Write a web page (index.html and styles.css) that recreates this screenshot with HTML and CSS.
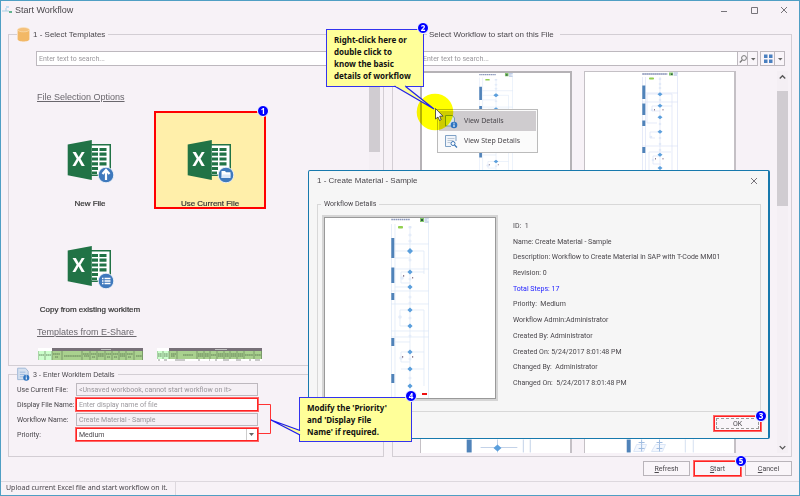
FILE: index.html
```html
<!DOCTYPE html>
<html lang="en">
<head>
<meta charset="utf-8">
<title>Start Workflow</title>
<link rel="stylesheet" href="styles.css">
</head>
<body>
<svg class="defs" aria-hidden="true">
  <symbol id="excel" viewBox="0 0 47 43">
    <rect x="24" y="4" width="20" height="32" fill="#217346"/>
    <rect x="24" y="5.500" width="18.500" height="29" fill="#fff"/>
    <g fill="#217346"><path d="M25 8h6v3h-6zM32.500 8h7v3h-7zM25 12.600h6v3.200h-6zM32.500 12.600h7v3.200h-7zM25 17.400h6v3.200h-6zM32.500 17.400h7v3.200h-7zM25 22.200h6v3.200h-6zM32.500 22.200h7v3.200h-7zM25 27h6v3h-6zM25 31.500h5v2.500h-5z"/></g>
    <path d="M.7 4.500 24.800 0v40L.7 35.300z" fill="#217346"/>
    <circle cx="39" cy="35" r="7.800" fill="#3f79bd" stroke="#f1f4f8" stroke-width=".9"/>
  </symbol>
  <symbol id="flow" viewBox="0 0 38 183" preserveAspectRatio="none">
    <path d="M.5 7v175M4 7v175M19 9v172M33 34v23M33 93v42M33 135v34M0 52h38M0 27h38M0 74h38M0 87h38M0 114h38M0 120h38M4 34h29M4 41h15M10 55h23M10 55v11h9M4 70h15M9 93h24M9 93v16h10M4 125h15M10 152h23M10 135h23M10 135v10h9M37.500 0v182" fill="none" stroke="#dbe6f7" stroke-width=".7"/>
    <g fill="#e4ecf9"><circle cx="19" cy="18" r="1.600"/><circle cx="19" cy="24" r="1.600"/><circle cx="19" cy="43" r="1.500"/><circle cx="19" cy="62" r="1.500"/><circle cx="19" cy="80" r="1.500"/><circle cx="19" cy="86" r="1.500"/><circle cx="19" cy="101" r="1.500"/><circle cx="19" cy="119" r="1.500"/><circle cx="19" cy="142" r="1.500"/><circle cx="19" cy="161" r="1.500"/><circle cx="9" cy="100" r="1.800"/><circle cx="11" cy="61" r="1.800"/><circle cx="10" cy="141" r="1.800"/></g>
    <path d="M.3 21h3v20h-3zM.3 50.500h3V66h-3zM.3 76h3v7h-3zM.3 121h3v8h-3zM.3 157h3v9h-3z" fill="#5083b9"/>
    <path d="m19 31 3 3-3 3-3-3zM19 52.400l2.600 2.600-2.600 2.600-2.600-2.600zM19 67.400l2.600 2.600-2.600 2.600-2.600-2.600zM19 90.400l2.600 2.600-2.600 2.600-2.600-2.600zM19 106.400l2.600 2.600-2.600 2.600-2.600-2.600zM19 132.400l2.600 2.600-2.600 2.600-2.600-2.600zM19 149.400l2.600 2.600-2.600 2.600-2.600-2.600zM19 166.400l2.600 2.600-2.600 2.600-2.600-2.600z" fill="#5b9fdc"/>
    <rect x="7" y="9" width="5" height="2.500" rx=".8" fill="#92d050"/>
    <rect x="17.500" y="9" width="3" height="2.500" rx=".8" fill="#dfe8f8"/>
    <path d="M12 58h1.200v1.800H12zM21 60h1.200v1.500H21zM11 139h1.200v1.800H11zM21 139h1.200v1.800H21z" fill="#8f7f92"/>
    <path d="M.3 2.500h18.500" stroke="#8a97bb" stroke-width="1.600" stroke-dasharray="1.600 .5"/>
    <path d="M29 0h4v5h-4z" fill="#84c76d"/><path d="M30 2h2v2h-2z" fill="#2d5b41"/>
    <path d="M33.500 1h4M33.500 3h3M33.500 5h4" stroke="#89a3d0" stroke-width=".8"/>
  </symbol>
  <symbol id="flow2" viewBox="0 0 36 110">
    <path d="M.5 5v105M3.500 5v105M18 5v105M30 22v88M0 21h36M0 30h36M5 22h25M5 22v29h10M10 34h20M10 34v5h8M8 60h10M8 60v6h5M0 74h36M7 80h22M7 80v24M11 84h8M11 84v8h8M35.500 0v110" fill="none" stroke="#dbe3f7" stroke-width=".7"/>
    <g fill="#e1e9f8"><circle cx="18" cy="7" r="1.300"/><circle cx="18" cy="12" r="1.300"/><circle cx="18" cy="16" r="1.300"/><circle cx="18" cy="28" r="1.300"/><circle cx="18" cy="52" r="1.300"/><circle cx="18" cy="66" r="1.300"/><circle cx="18" cy="72" r="1.300"/><circle cx="18" cy="78" r="1.300"/><circle cx="10" cy="38" r="1.300"/><circle cx="9" cy="65" r="1.300"/><circle cx="11" cy="88" r="1.300"/></g>
    <path d="M.3 13.500h3V27h-3zM.3 31.500h3V43h-3zM.3 48.500h3v5.500h-3zM.3 75h3v6h-3z" fill="#5083b9"/>
    <path d="m18 20.200 2.500 2-2.500 2-2.500-2zM18 31.700l2.500 2-2.500 2-2.500-2zM18 43.200l2.500 2-2.500 2-2.500-2zM18 57.700l2.500 2-2.500 2-2.500-2zM18 80.700l2.500 2-2.500 2-2.500-2zM18 94l2.500 2-2.500 2-2.500-2z" fill="#5b9fdc"/>
    <rect x="7" y="5.500" width="5" height="2" rx=".8" fill="#92d050"/>
    <path d="M12 37h1v1.500h-1zM20.500 37h1v1.500h-1zM13 86h1v1.500h-1zM20.500 86h1v1.500h-1z" fill="#8f7f92"/>
    <path d="M.3 2h25" stroke="#7c88b0" stroke-width="1.400" stroke-dasharray="1.600 .4"/>
    <path d="M27 .5h4v3h-4z" fill="#84c76d"/><path d="M29 1.500h1.500V3H29z" fill="#2d5b41"/>
    <path d="M31.500 1h4M31.500 3h3.500" stroke="#89a3d0" stroke-width=".8"/>
  </symbol>
  <symbol id="cylinder" viewBox="0 0 12 14">
    <path d="M.5 2.500v9c0 2.800 11 2.800 11 0v-9z" fill="#f2b866"/>
    <ellipse cx="6" cy="2.500" rx="5.500" ry="2" fill="#f4c17b" stroke="#fbe3bd" stroke-width=".6"/>
  </symbol>
  <symbol id="docinfo" viewBox="0 0 14 15">
    <path d="M.7.700h8.500L12 4v9H.7z" fill="#d5e0ef" stroke="#9db6d6"/>
    <path d="M3 5h6M3 7.500h6M3 10h4" stroke="#9ab9e0"/>
    <circle cx="10" cy="11" r="3.300" fill="#2e74c0"/>
    <path d="M10 10.500v2.500M10 8.700v1" stroke="#fff" stroke-width="1.200"/>
  </symbol>
</svg>

<main class="window">
  <header class="titlebar">
    <svg class="app-icon" viewBox="0 0 10 10"><path d="M0 6h4M4 3v3h3" stroke="#a9cfe3" fill="none"/><path d="M4 1h3v2H4z" fill="#c3dcf0"/><path d="M7 6h3v2H7z" fill="#63b38f"/></svg>
    <h1>Start Workflow</h1>
    <button class="win" aria-label="Minimize"><svg viewBox="0 0 8 8"><path d="M1 5.500h6"/></svg></button>
    <button class="win" aria-label="Maximize"><svg viewBox="0 0 8 8"><path d="M1.500 1.500h6v6h-6z"/></svg></button>
    <button class="win" aria-label="Close"><svg viewBox="0 0 8 8"><path d="m1 1 6 6M7 1 1 7"/></svg></button>
  </header>

  <div class="columns">
    <div class="left">
      <fieldset class="panel templates">
        <legend><svg class="legend-icon"><use href="#cylinder"/></svg>1 - Select Templates</legend>
        <input class="search" type="text" placeholder="Enter text to search..." aria-label="Search templates">
        <div class="scroller">
          <div class="list">
            <h2>File Selection Options</h2>
            <div class="tiles">
              <button class="tile"><svg class="excel" viewBox="0 0 47 43"><use href="#excel"/><text x="11.500" y="26" text-anchor="middle">X</text><path d="M39 40v-9M35.500 34l3.500-4 3.500 4" stroke="#fff" stroke-width="2.200" fill="none"/></svg><span>New File</span></button>
              <button class="tile selected"><svg class="excel" viewBox="0 0 47 43"><use href="#excel"/><text x="11.500" y="26" text-anchor="middle">X</text><path d="M34.500 31h3.500l1 1.300h4.500V38h-9z" fill="#fff"/><path d="M35.500 34.500h8L42.500 38h-8z" fill="#dce8f8"/></svg><span>Use Current File</span></button>
              <button class="tile"><svg class="excel" viewBox="0 0 47 43"><use href="#excel"/><text x="11.500" y="26" text-anchor="middle">X</text><path d="M35 32.500h1.500M37.500 32.500h6M35 35h1.500M37.500 35h6M35 37.500h1.500M37.500 37.500h6" stroke="#fff" stroke-width="1.300"/></svg><span>Copy from existing workitem</span></button>
            </div>
            <h2>Templates from E-Share&nbsp;</h2>
            <div class="sheets">
              <svg viewBox="0 0 105 13"><path d="M0 0h14v3H0z" fill="#fff"/><path d="M14 0h91v3H14z" fill="#777078"/><path d="M63 1.500h10" stroke="#bbb"/><path d="M0 3h14v9H0z" fill="#ccffcc"/><path d="M14 3h91v9H14z" fill="#a9d18e"/><path d="M0 3v9M7 3v9M14 3v9M24 3v9M44 3v9M52 3v9M59 3v9M67 3v9M74 3v9M81 3v9M88 3v9M96 3v9M104.500 3v9" stroke="#5a7752" stroke-width=".6"/><path d="M1 7h5M8 7h5M15 6h7M26 8h17M45 6h6M53 6h5M60 6h6M68 6h5M75 6h5M82 6h5M89 6h6M98 8h6M17 9h3M46 8h5M54 9h3M60 8h6M69 9h3M76 9h3M82 8h5M90 9h3" stroke="#526b49" stroke-width=".8" stroke-dasharray="1.500 .3"/></svg>
              <svg viewBox="0 0 105 13"><path d="M0 0h12v3H0z" fill="#fff"/><path d="M12 0h93v3H12z" fill="#777078"/><path d="M58 1.500h12" stroke="#bbb"/><path d="M0 3h12v8H0z" fill="#ccffcc"/><path d="M12 3h93v8H12z" fill="#a9d18e"/><path d="M0 11h105v2H0z" fill="#fff"/><path d="M0 3v8M6 3v8M12 3v8M20 3v8M40 3v8M47 3v8M53 3v8M60 3v8M67 3v8M73 3v8M80 3v8M87 3v8M97 3v8M104.500 3v8" stroke="#5a7752" stroke-width=".6"/><path d="M1 6h4M7 6h4M14 6h5M26 7h10M41 6h5M48 6h4M54 7h5M61 6h5M68 6h4M74 6h5M81 6h5M88 7h8M98 7h6M1 8h4M7 8h4M14 8h4M41 8h5M48 8h4M61 8h5M68 8h4M74 8h5M81 8h5" stroke="#526b49" stroke-width=".8" stroke-dasharray="1.500 .3"/><path d="M1 12h2M7 12h3M18 12h10M41 12h2M52 12h1M58 12h2M66 12h6M79 12h5M92 12h2M98 12h5" stroke="#777" stroke-width=".8"/></svg>
            </div>
          </div>
          <div class="bar"><i class="thumb"></i></div>
        </div>
      </fieldset>

      <fieldset class="panel details">
        <legend><svg class="legend-icon"><use href="#docinfo"/></svg>3 - Enter Workitem Details</legend>
        <div class="form">
          <label for="cur">Use Current File:</label><input id="cur" type="text" value="&lt;Unsaved workbook, cannot start workflow on it&gt;" disabled>
          <label for="disp">Display File Name:</label><input id="disp" class="marked" type="text" placeholder="Enter display name of file">
          <label for="wf">Workflow Name:</label><input id="wf" type="text" value="Create Material - Sample" disabled>
          <label for="prio">Priority:</label><select id="prio" class="marked"><option>Medium</option></select>
        </div>
      </fieldset>
    </div>

    <fieldset class="panel workflows">
      <legend>Select Workflow to start on this File</legend>
      <div class="searchrow">
        <input class="search" type="text" placeholder="Enter text to search..." aria-label="Search workflows">
        <button class="cell" aria-label="Search"><svg viewBox="0 0 10 12"><circle cx="6" cy="5" r="2.400" fill="none" stroke="#777"/><path d="M4.200 7 1.800 9.500" stroke="#777" stroke-width="1.300"/></svg></button>
        <button class="cell" aria-label="Search options"><svg viewBox="0 0 10 12"><path d="M3 5h4.500L5.250 7.500z" fill="#666"/></svg></button>
        <button class="cell view" aria-label="View"><svg viewBox="0 0 14 12"><path d="M3 1.500h3.500V5H3zM8 1.500h3.500V5H8zM3 6.500h3.500V10H3zM8 6.500h3.500V10H8z" fill="#4a80c0"/></svg></button>
        <button class="cell" aria-label="View options"><svg viewBox="0 0 10 12"><path d="M3 5h4.500L5.250 7.500z" fill="#666"/></svg></button>
      </div>
      <div class="scroller">
        <div class="cards">
          <div class="card current"><svg class="flow"><use href="#flow"/></svg></div>
          <div class="card"><svg class="flow2"><use href="#flow2"/></svg></div>
          <div class="card low"><svg viewBox="0 0 150 13"><path d="M46 0h5v13h-5z" fill="#5083b9"/><path d="M77 0v13M103 0v13M110 0v13M60 8h37" stroke="#c3d2e8" fill="none"/><path d="m77 5 4 3.500-4 3.500-4-3.500z" fill="#5b9fdc"/></svg></div>
          <div class="card low"><svg viewBox="0 0 150 13"><path d="M42 0h4v13h-4z" fill="#5083b9"/><path d="M101 0v13M109 0v13" stroke="#d5e0f0"/><path d="M52 5h10l-3 7H49zM71 5h10l-3 7H67z" fill="#f4f8fe" stroke="#dbe6f7"/><path d="M57 0v5M75 0v5M54 3h6M72 3h6M54 9h6M72 9h6M57 5v7M75 5v7" stroke="#9fbbe0"/></svg></div>
        </div>
        <div class="bar full"><svg viewBox="0 0 8 8"><path d="m2 5.500 2-2 2 2"/></svg><i class="thumb"></i><svg class="down" viewBox="0 0 8 8"><path d="m2 3 2 2 2-2"/></svg></div>
      </div>
    </fieldset>
  </div>

  <div class="actions">
    <button><u>R</u>efresh</button>
    <button class="marked"><u>S</u>tart</button>
    <button><u>C</u>ancel</button>
  </div>
  <footer class="status"><span>Upload current Excel file and start workflow on it.</span></footer>

  <div class="menu" role="menu">
    <button role="menuitem" class="on"><svg viewBox="0 0 14 15"><path d="M1.500 1.500h7l2 2.500v8h-9z" fill="#d7e3ea" stroke="#7b98b4"/><circle cx="10" cy="11" r="3.300" fill="#2e74c0"/><path d="M10 10.500v2.500M10 8.700v1" stroke="#fff" stroke-width="1.100"/></svg>View Details</button>
    <button role="menuitem"><svg viewBox="0 0 14 15"><path d="M12 7V1.500H1.500v11H7" fill="#f1f5fa" stroke="#7fa1c5"/><path d="M3.500 4.500h7M3.500 6.500h6M3.500 8.500h3" stroke="#bcc8d6"/><circle cx="9" cy="9.500" r="2" fill="#fff" stroke="#3c76b5"/><path d="m10.500 11 2.500 2.500" stroke="#3c76b5" stroke-width="1.300"/></svg>View Step Details</button>
  </div>

  <section class="dialog" role="dialog" aria-labelledby="dlg-title">
    <header><h2 id="dlg-title">1 - Create Material - Sample</h2><button class="win" aria-label="Close dialog"><svg viewBox="0 0 8 8"><path d="m1 1 6 6M7 1 1 7"/></svg></button></header>
    <fieldset class="panel">
      <legend>Workflow Details</legend>
      <div class="info">
        <div class="preview"><svg class="flow"><use href="#flow"/></svg><i class="stop"></i></div>
        <ul>
          <li>ID:&nbsp; 1</li>
          <li>Name: Create Material - Sample</li>
          <li>Description: Workflow to Create Material in SAP with T-Code MM01</li>
          <li>Revision: 0</li>
          <li class="link">Total Steps: 17</li>
          <li>Priority:&nbsp; Medium</li>
          <li>Workflow Admin:Administrator</li>
          <li>Created By: Administrator</li>
          <li>Created On: 5/24/2017 8:01:48 PM</li>
          <li>Changed By:&nbsp; Administrator</li>
          <li>Changed On:&nbsp; 5/24/2017 8:01:48 PM</li>
        </ul>
      </div>
    </fieldset>
    <div class="dialog-actions"><button>OK</button></div>
  </section>

  <svg class="ink glow" viewBox="0 0 800 496"><circle cx="435" cy="112" r="18.300" fill="#ffff00"/></svg>
  <p class="note tip">Right-click here or<br>double click to<br>know the basic<br>details of workflow</p>
  <p class="note edit">Modify the 'Priority'<br>and 'Display File<br>Name' if required.</p>
  <svg class="ink" viewBox="0 0 800 496">
    <path d="M394.500 86 434 109 405 86" fill="#ffff99" stroke="#2323e8" stroke-width="1.300"/>
    <path d="M395.500 85h9l1 1.800h-9z" fill="#ffff99"/>
    <path d="M257 404.500h13.500v29H257" fill="none" stroke="#f33" stroke-width="1"/>
    <path d="M300 430.500 271 420l29 15" fill="#ffff99" stroke="#1a1af0" stroke-width="1.300"/>
    <path d="M435.500 108.500v10.500l2.500-2 1.500 3.500 1.700-.8-1.500-3.500h3.300z" fill="#fff" stroke="#333" stroke-width=".8"/>
  </svg>
  <b class="badge b1">1</b><b class="badge b2">2</b><b class="badge b3">3</b><b class="badge b4">4</b><b class="badge b5">5</b>
</main>
</body>
</html>
```
FILE: styles.css
```css
* { box-sizing: border-box; }
body {
  margin: 0;
  background: #f7f2f7;
  color: #4a474c;
  font: 7px/10px Roboto, "Liberation Sans", sans-serif;
}
button, input, select { font: inherit; color: inherit; margin: 0; padding: 0; border-radius: 0; }
h1, h2, p, ul { margin: 0; padding: 0; font-weight: 400; }
svg { display: block; }
.defs { position: absolute; width: 0; height: 0; }
.window {
  position: relative;
  display: flex;
  flex-direction: column;
  height: 100vh;
  border: 1px solid #4f9fc4;
  overflow: hidden;
}
.titlebar { display: flex; align-items: center; height: 18px; padding-left: 1px; flex: none; }
.titlebar h1 { font: 9px/12px "Liberation Sans", sans-serif; flex: 1; margin-left: 3px; }
.app-icon { width: 10px; height: 10px; }
.win { width: 30px; height: 18px; border: 0; background: none; display: grid; place-items: center; }
.win svg { width: 8px; height: 8px; fill: none; stroke: #77747a; stroke-width: 1; }

.columns { flex: 1; min-height: 0; display: grid; grid-template-columns: 376fr 400fr; gap: 8px; padding: 8px 7px 0; }
.left { display: flex; flex-direction: column; gap: 1px; min-height: 0; }
.panel { margin: 0; padding: 0; min-width: 0; border: 1px solid #d3ced4; display: flex; flex-direction: column; }
.panel legend { display: flex; align-items: center; gap: 3px; height: 15px; margin-left: -19px; padding: 0 3px 0 0; font: 8px/12px "Liberation Sans", sans-serif; }
.legend-icon { width: 13px; height: 15px; }
.templates { flex: 1; min-height: 0; padding: 9px 3px 3px 27px; }
.search { flex: none; width: 100%; height: 15px; padding: 0 2px; border: 1px solid #bdb8be; background: #fff; }
::placeholder { color: #9b989d; opacity: 1; }
.scroller { flex: 1; min-height: 0; display: flex; margin-top: 5px; }
.list { flex: 1; overflow: hidden; padding-top: 20px; }
.list h2 { font: 9px/13px "Liberation Sans", sans-serif; text-decoration: underline; color: #6a676d; margin: 0 0 7px 1px; }
.tiles { display: grid; grid-template-columns: repeat(auto-fill, 112px); grid-auto-rows: 98px; gap: 8px; padding-right: 80px; margin: 0 0 11px -2px; }
.tile { display: flex; flex-direction: column; align-items: center; border: 2px solid transparent; background: none; padding: 27px 0 0; font: 8px/10px "Liberation Sans", sans-serif; white-space: nowrap; color: #333; -webkit-text-stroke: .2px; }
.tile.selected { border-color: #f00; background: #ffefaa; }
.excel { width: 47px; height: 43px; flex: none; margin-bottom: 16px; }
.excel text { font: 900 18px Lato, sans-serif; fill: #fff; }
.sheets { display: flex; gap: 14px; margin: 9px 0 0 2px; }
.sheets svg { width: 105px; height: 13px; }
.bar { width: 11px; background: #f4eff4; flex: none; display: flex; flex-direction: column; }
.bar .thumb { flex: none; height: 81px; background: #d0ccd1; }
.bar.full .thumb { height: 115px; }
.bar svg { width: 11px; height: 20px; fill: none; stroke: #555; flex: none; padding-bottom: 9px; }
.bar .down { margin-top: auto; height: 11px; padding: 0; }

.details { padding: 1px 0 15px 8px; }
.details legend { font-size: 7px; margin-left: 0; }
.form { display: grid; grid-template-columns: 59px 182px; row-gap: 2px; align-items: center; }
.form input, .form select { width: 100%; height: 13px; padding: 0 2px; border: 1px solid #bdb8be; background: #fff; }
.form input:disabled { background: #f5f0f5; color: #99969b; }
.form select { appearance: none; background: #fff url("data:image/svg+xml,%3Csvg xmlns='http://www.w3.org/2000/svg' width='11' height='11'%3E%3Cpath d='M.5 0v11' stroke='%23ccc'/%3E%3Cpath d='M3 4h5L5.500 7z' fill='%23666'/%3E%3C/svg%3E") right center no-repeat; }
.form .marked { border: 1px solid #f22; box-shadow: 0 0 0 1px #f66; }

.workflows { padding: 9px 6px 3px 27px; min-height: 0; }
.workflows legend { margin-left: 7px; padding: 0 6px 0 2px; }
.searchrow { display: flex; flex: none; }
.searchrow .search { flex: 1; min-width: 0; }
.cell { width: 10px; height: 15px; border: 1px solid #bdb8be; border-left: 0; background: #f9f5f9; display: grid; place-items: center; }
.cell svg { width: 10px; height: 12px; }
.cell.view { width: 15px; margin-left: 2px; border-left: 1px solid #bdb8be; }
.cell.view svg { width: 14px; }
.workflows .scroller { margin-right: -3px; justify-content: space-between; }
.cards { flex: 0 1 316px; display: grid; grid-template-columns: 1fr 1fr; grid-template-rows: 1fr 14px; gap: 12px; min-height: 0; }
.card { min-height: 0; overflow: hidden; background: #fff; border: 1px solid #c4c0c5; border-right-width: 2px; display: flex; justify-content: center; }
.card.current { border: 2px solid #b5b2b6; }
.card .flow { width: 34px; height: 120px; flex: none; }
.card .flow2 { width: 36px; height: 110px; flex: none; }
.card.low { border-top: 0; border-bottom: 0; }
.card.low svg { width: 100%; height: 14px; }

.actions { flex: none; display: flex; justify-content: flex-end; gap: 4px; padding: 4px 7px 5px 0; }
.actions button, .dialog-actions button { width: 47px; height: 15px; border: 1px solid #b9b4ba; background: #f9f5f9; }
.actions button.marked, .dialog-actions button { border: 1px solid #f22; box-shadow: 0 0 0 1px #f66; }
.status { flex: none; height: 14px; border-top: 1px solid #ddd8de; display: flex; font-family: "Noto Sans", sans-serif; }
.status span { padding: 1px 7px 0 5px; border-right: 1px solid #ddd8de; }

.menu { position: absolute; left: 436px; top: 108px; width: 101px; padding: 1px; border: 1px solid #bbb; background: #fbfbfb; font-family: "Noto Sans", sans-serif; }
.menu button { display: flex; align-items: center; gap: 6px; width: 100%; height: 20px; padding-left: 5px; border: 0; background: none; white-space: nowrap; }
.menu .on { background: #cfcccf; }
.menu svg { width: 14px; height: 15px; }

.dialog { position: absolute; left: 307px; top: 169px; width: 462px; padding: 0 7px 7px 8px; border: 1px solid #1779ad; border-right-width: 2px; border-radius: 2px; background: #f6f6f6; }
.dialog header { display: flex; align-items: center; height: 20px; }
.dialog header h2 { flex: 1; font: 8px/12px "Liberation Sans", sans-serif; }
.dialog header .win { width: 14px; }
.dialog .panel { margin-top: 6px; padding: 4px 3px 10px 4px; border-color: #d8d8d8; }
.dialog legend { font: inherit; height: 14px; margin-left: -1px; padding: 0 3px; }
.info { display: flex; gap: 15px; }
.preview { position: relative; width: 176px; height: 186px; border: 2px solid #d5d5d5; outline: 1px solid #999; outline-offset: -3px; background: #fff; display: flex; justify-content: center; flex: none; }
.preview .flow { width: 38px; height: 183px; }
.stop { position: absolute; left: 98px; bottom: 4px; width: 5px; height: 2px; background: #e11; }
.info ul { list-style: none; display: flex; flex-direction: column; justify-content: space-between; padding: 6px 0 13px; }
.info .link { color: #22f; }
.dialog-actions { display: flex; justify-content: flex-end; padding-top: 4px; }
.dialog-actions button { outline: 1px dashed #999; outline-offset: -3px; }

.ink { position: absolute; left: -1px; top: -1px; width: 800px; height: 496px; pointer-events: none; }
.glow { mix-blend-mode: multiply; }
.note { position: absolute; background: #ffff99; border: 1px solid #33e; color: #111; font: bold 8px/12px "Noto Sans", sans-serif; padding: 4px 7px; white-space: nowrap; }
.tip { left: 325px; top: 28px; width: 98px; height: 58px; }
.edit { left: 298px; top: 396px; width: 113px; height: 45px; }
.badge { position: absolute; width: 12px; height: 12px; border: 1px solid #fff; border-radius: 50%; background: #00f; color: #fff; font: bold 8px/10px "Noto Sans", sans-serif; text-align: center; }
.b1 { left: 256px; top: 104px; }
.b2 { left: 416px; top: 21px; }
.b3 { left: 754px; top: 409px; }
.b4 { left: 404px; top: 389px; }
.b5 { left: 734px; top: 454px; }
```
